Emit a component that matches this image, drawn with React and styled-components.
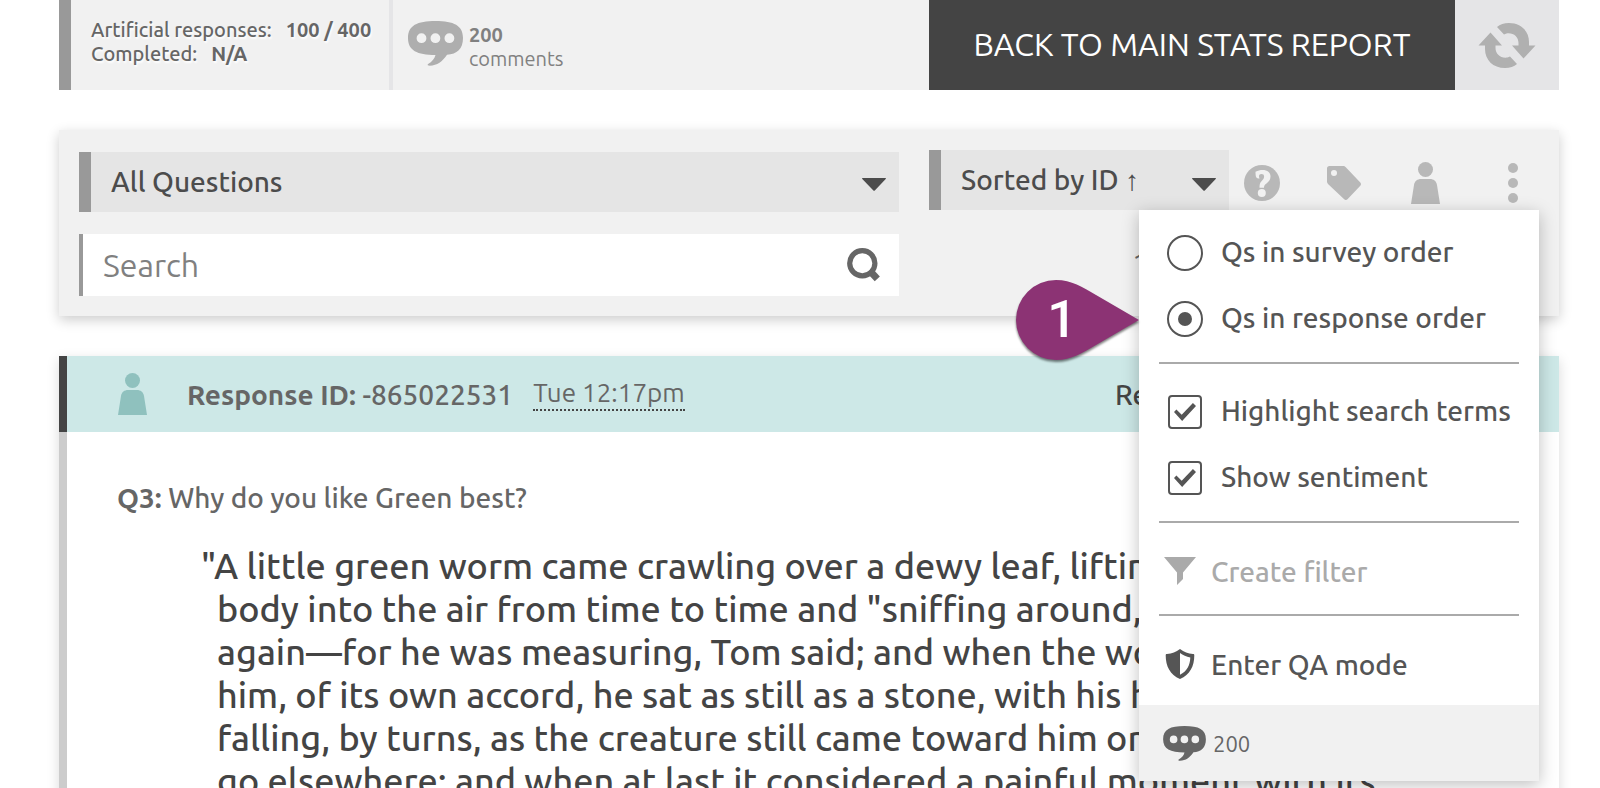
import React, { useState } from "react";
import styled, { createGlobalStyle } from "styled-components";

const GlobalStyle = createGlobalStyle`
  *, *:before, *:after {
    box-sizing: border-box;
  }

  body {
    margin: 0;
    background: #fff;
    color: #666;
    font-family: Ubuntu, "Noto Sans", sans-serif;
    font-size: 28px;
  }

  button, input, select {
    margin: 0;
    padding: 0;
    border: 0;
    border-radius: 0;
    background: none;
    color: inherit;
    font: inherit;
  }

  button {
    cursor: pointer;
  }

  svg {
    display: block;
    flex: none;
  }
`;

/* ---------- icons ---------- */

const CommentIcon = ({ width, height }) => (
  <svg width={width} height={height} viewBox="0 0 55 45" aria-hidden="true">
    <path
      fill="currentColor"
      fillRule="evenodd"
      d="M27.500 0C46 0 55 4.500 55 17c0 11-6 16-16 16.800C34 41 29 45 20.500 44.600c-1-.1-1.200-.9-.4-1.500C24 40.500 26.500 38 27.500 34 9 34 0 29.500 0 17S9 0 27.500 0zM13.500 12.300a4.900 4.900 0 1 0 0 9.800 4.900 4.900 0 0 0 0-9.800zm13.900 0a4.900 4.900 0 1 0 0 9.800 4.900 4.900 0 0 0 0-9.800zm14 0a4.900 4.900 0 1 0 0 9.800 4.900 4.900 0 0 0 0-9.800z"
    />
  </svg>
);

const RefreshIcon = () => (
  <svg width="58" height="45" viewBox="0 0 58 45" aria-hidden="true">
    <g fill="currentColor">
      <path d="M19 4C22 1.500 26 0 31 0c12 0 20 8 20 19v3.500h6.500L45.500 35.500 34 22.500h6.500V20c0-6-5-10.500-12-9.500l-2.500 1z" />
      <path
        transform="rotate(180 29 22.500)"
        d="M19 4C22 1.500 26 0 31 0c12 0 20 8 20 19v3.500h6.500L45.500 35.500 34 22.500h6.500V20c0-6-5-10.500-12-9.500l-2.500 1z"
      />
    </g>
  </svg>
);

const HelpIcon = () => (
  <svg width="36" height="36" viewBox="0 0 36 36" aria-hidden="true">
    <circle cx="18" cy="18" r="18" fill="currentColor" />
    <path
      fill="#f1f1f1"
      d="M11.500 6.800C14 5.600 16 5.100 18.500 5.100c5 0 8 2.500 8 6.500 0 3.600-2 5.400-4.300 7.200-1.600 1.200-2.200 2-2.200 4h-4.500c0-3 .3-4.800 2-6.600 1.600-1.700 2.600-2.700 2.600-4.600 0-1.700-1-2.500-2.700-2.500-1.500 0-2.300.8-2.400 2.200 0 .8.300 1.500.6 2.200-1.500.2-2.600-.1-3.200-.9-.8-1.200-.9-3.800-.9-5.800z"
    />
    <circle cx="17.800" cy="28" r="4" fill="#f1f1f1" />
  </svg>
);

const PersonIcon = () => (
  <svg width="30" height="42" viewBox="0 0 30 42" aria-hidden="true">
    <g fill="currentColor">
      <circle cx="14.500" cy="7.500" r="7.500" />
      <path d="M0 42 3 23c.6-4 3.500-6 7-6h9c3.500 0 6.400 2 7 6l3 19z" />
    </g>
  </svg>
);

const TagIcon = () => (
  <svg width="34" height="34" viewBox="0 0 34 34" aria-hidden="true">
    <path
      fill="currentColor"
      fillRule="evenodd"
      d="M2.500 0H16c1.200 0 2 .4 2.800 1.200L33.300 16.500c.9 1 .9 2.300 0 3.200L20.500 33.200c-1 1-2.400 1-3.300 0L1 18C.3 17.300 0 16.500 0 15.500v-13C0 .9.900 0 2.500 0zM7 4a3 3 0 1 0 0 6 3 3 0 0 0 0-6z"
    />
  </svg>
);

const KebabIcon = () => (
  <svg width="10" height="40" viewBox="0 0 10 40" aria-hidden="true">
    <g fill="currentColor">
      <circle cx="5" cy="5" r="5" />
      <circle cx="5" cy="20" r="5" />
      <circle cx="5" cy="35" r="5" />
    </g>
  </svg>
);

const SearchIcon = () => (
  <svg width="34" height="34" viewBox="0 0 34 34" aria-hidden="true">
    <g fill="none" stroke="currentColor">
      <circle cx="15.300" cy="15.200" r="12.600" strokeWidth="5.200" />
      <path d="M22.500 22.500 30.300 30.800" strokeWidth="7" />
    </g>
  </svg>
);

const Caret = () => (
  <svg width="24" height="13" viewBox="0 0 24 13" aria-hidden="true">
    <path fill="currentColor" d="M.5 0h23c.5 0 .6.600.2 1L12.800 12.400c-.4.400-1 .400-1.400 0L.3 1C-.1.600 0 0 .5 0z" />
  </svg>
);

const FilterIcon = () => (
  <svg width="32" height="28" viewBox="0 0 32 28" aria-hidden="true">
    <path fill="currentColor" d="M0 0h32L19 15.500V22l-6 6V15.500z" />
  </svg>
);

const ShieldIcon = () => (
  <svg width="32" height="30" viewBox="0 0 32 30" aria-hidden="true">
    <path
      fill="currentColor"
      fillRule="evenodd"
      d="M16 0c4 3 8 4.600 13 5 1 0 1.300.5 1.300 1.400C30.300 17 26 25.500 16 30 6 25.500 1.700 17 1.700 6.400 1.700 5.500 2 5 3 5c5-.4 9-2 13-5zm0 4v21.800c7-3.600 10-9.300 10.300-17.300C22.300 7.800 19 6.300 16 4z"
    />
  </svg>
);

/* ---------- layout ---------- */

const Page = styled.main`
  height: 100vh;
  overflow: hidden;
  padding: 0 41px 0 59px;
`;

const StatsBar = styled.header`
  display: flex;
  height: 90px;
  border-left: 12px solid #999;
  background: #f1f1f1;
  font-size: 20px;
  line-height: 24px;
`;

const Stats = styled.dl`
  width: 322px;
  margin: 0;
  padding: 18px 0 0 20px;
  border-right: 4px solid #e5e5e7;
  font-weight: 500;
  text-shadow: 1px 2px 2px #fff;
  white-space: nowrap;
`;

const Stat = styled.div`
  display: flex;
  gap: 14px;

  dd {
    margin: 0;
    font-weight: bold;
  }
`;

const Comments = styled.div`
  flex: 1;
  display: flex;
  align-items: flex-start;
  gap: 6px;
  padding: 21px 0 0 15px;
  color: #aeaeae;

  p {
    margin: 2px 0 0;
    color: #808080;
  }

  strong {
    display: block;
  }
`;

const BackButton = styled.button`
  width: 526px;
  padding-bottom: 2px;
  background: #444;
  color: #fff;
  font-size: 32px;
  white-space: nowrap;
`;

const RefreshButton = styled.button`
  display: grid;
  place-items: center;
  width: 104px;
  background: #e5e5e7;
  color: #b0b0b0;
`;

const Toolbar = styled.section`
  position: relative;
  z-index: 1;
  display: grid;
  grid-template-columns: 82fr 61fr;
  gap: 30px;
  margin-top: 40px;
  padding: 20px;
  background: #f1f1f1;
  box-shadow: 0 4px 12px rgba(0, 0, 0, 0.2);
`;

const Column = styled.div`
  display: flex;
  flex-direction: column;
  gap: 22px;
  min-width: 0;
  padding-top: ${(props) => props.$top || 0}px;
`;

const SelectBox = styled.div`
  display: grid;
  align-items: center;
  flex: ${(props) => props.$basis || "none"};
  height: 60px;
  border-left: 12px solid #999;
  background: #e5e5e5;
  color: #4c4c4c;

  select,
  svg {
    grid-area: 1 / 1;
  }

  select {
    appearance: none;
    width: 100%;
    height: 60px;
    padding: 0 50px 2px 20px;
    outline: none;
    font-weight: 500;
  }

  svg {
    justify-self: end;
    margin: ${(props) => (props.$basis ? 8 : 4)}px 13px 0 0;
    pointer-events: none;
  }
`;

const SearchBox = styled.form`
  display: flex;
  align-items: center;
  height: 62px;
  padding-right: 18px;
  border-left: 4px solid #999;
  background: #fff;
  color: #666;

  input {
    flex: 1;
    min-width: 0;
    height: 62px;
    padding: 0 20px;
    outline: none;
    font-size: 32px;
  }

  input::placeholder {
    color: #808080;
    opacity: 1;
  }
`;

const Actions = styled.div`
  display: flex;
`;

const IconRow = styled.div`
  flex: 1;
  display: flex;
  align-items: center;
  gap: 46px;
  padding: 6px 8px 0 15px;
  color: #b8b8b8;
`;

const IconButton = styled.button`
  display: grid;
  place-items: center;
  width: 36px;
  height: 44px;

  &:last-child {
    margin-left: auto;
  }
`;

const Total = styled.p`
  margin: 0;
  padding-right: 391px;
  line-height: 62px;
  text-align: right;
`;

/* ---------- options menu ---------- */

const Menu = styled.div`
  position: absolute;
  top: 80px;
  right: 20px;
  width: 400px;
  background: #fff;
  box-shadow: 0 4px 16px rgba(0, 0, 0, 0.25);
  color: #555;
`;

const MenuGroup = styled.div`
  margin: 0 20px;
  padding: 15px 0 10px;
  border-bottom: 2px solid #aaa;
  font-weight: 500;

  &:first-child {
    padding-top: 10px;
  }
`;

const LastGroup = styled(MenuGroup)`
  padding-bottom: 8px;
  border-bottom: 0;
`;

const Choice = styled.label`
  display: flex;
  align-items: center;
  gap: 18px;
  height: 66px;
  padding-left: 8px;
  line-height: 32px;
  white-space: nowrap;

  span {
    padding-bottom: 2px;
  }
`;

const Radio = styled.input.attrs({ type: "radio" })`
  appearance: none;
  display: grid;
  place-items: center;
  width: 36px;
  height: 36px;
  border: 2px solid #555;
  border-radius: 50%;

  &:checked:before {
    content: "";
    width: 14px;
    height: 14px;
    border-radius: 50%;
    background: #555;
  }
`;

const Checkbox = styled.input.attrs({ type: "checkbox" })`
  appearance: none;
  display: grid;
  place-items: center;
  width: 34px;
  height: 34px;
  margin: 0 1px;
  border: 2px solid #555;
  border-radius: 4px;

  &:checked:before {
    content: "";
    width: 22px;
    height: 18px;
    background: #555;
    clip-path: polygon(0 50%, 11% 36%, 35% 65%, 86% 0, 100% 16%, 37% 100%);
  }
`;

const MenuButton = styled.button`
  display: flex;
  align-items: center;
  gap: 15px;
  width: 100%;
  height: 66px;
  padding-left: 5px;

  &:disabled {
    color: #aaa;
  }
`;

const MenuFooter = styled.div`
  display: flex;
  align-items: center;
  gap: 7px;
  height: 76px;
  padding-left: 24px;
  background: #f1f1f1;
  color: #666;
  font-size: 22px;
`;

const Callout = styled.div`
  position: absolute;
  top: 70px;
  right: 100%;
  display: grid;
  align-items: center;
  color: #fff;
  font: 500 52px/80px Roboto, sans-serif;

  svg,
  span {
    grid-area: 1 / 1;
  }

  svg {
    filter: drop-shadow(0 2px 1px rgba(0, 0, 0, 0.5));
  }

  span {
    z-index: 1;
    width: 92px;
    text-align: center;
  }
`;

/* ---------- response ---------- */

const Response = styled.article`
  margin-top: 40px;
  box-shadow: 0 4px 12px rgba(0, 0, 0, 0.15);
`;

const ResponseHead = styled.div`
  display: flex;
  align-items: center;
  height: 76px;
  padding-left: 51px;
  border-left: 8px solid #444;
  background: #cde8e7;
  font-weight: 500;
  white-space: nowrap;

  svg {
    margin-right: 39px;
    color: #8fc1be;
  }
`;

const Time = styled.time`
  margin-left: 20px;
  border-bottom: 2px dotted #444;
  font-size: 26px;
  font-weight: normal;
  line-height: 32px;
`;

const Respondent = styled.span`
  width: 444px;
  margin-left: auto;
  color: #444;
`;

const ResponseBody = styled.div`
  min-height: 400px;
  padding: 50px 0 0 50px;
  border-left: 8px solid #ccc;
`;

const Question = styled.h2`
  margin: 0;
  font-size: 28px;
  font-weight: 500;
  line-height: 32px;
`;

const Quote = styled.blockquote`
  margin: 30px 0 0 100px;
  color: #444;
  font-size: 36px;
  font-weight: 500;
  line-height: 43px;
`;

const Line = styled.span`
  display: block;
  text-indent: ${(props) => (props.$open ? -16 : 0)}px;
  white-space: nowrap;
`;

const answer = [
  '"A little green worm came crawling over a dewy leaf, lifting two-thirds of his',
  'body into the air from time to time and "sniffing around," then proceeding',
  "again—for he was measuring, Tom said; and when the worm approached",
  "him, of its own accord, he sat as still as a stone, with his hopes rising and",
  "falling, by turns, as the creature still came toward him or seemed inclined to",
  "go elsewhere; and when at last it considered a painful moment with its",
];

const OptionsMenu = () => {
  const [order, setOrder] = useState("response");
  const [highlight, setHighlight] = useState(true);
  const [sentiment, setSentiment] = useState(true);

  return (
    <Menu>
      <MenuGroup>
        <Choice>
          <Radio name="order" checked={order === "survey"} onChange={() => setOrder("survey")} />
          <span>Qs in survey order</span>
        </Choice>
        <Choice>
          <Radio name="order" checked={order === "response"} onChange={() => setOrder("response")} />
          <span>Qs in response order</span>
        </Choice>
      </MenuGroup>
      <MenuGroup>
        <Choice>
          <Checkbox checked={highlight} onChange={(e) => setHighlight(e.target.checked)} />
          <span>Highlight search terms</span>
        </Choice>
        <Choice>
          <Checkbox checked={sentiment} onChange={(e) => setSentiment(e.target.checked)} />
          <span>Show sentiment</span>
        </Choice>
      </MenuGroup>
      <MenuGroup>
        <MenuButton type="button" disabled>
          <FilterIcon />
          Create filter
        </MenuButton>
      </MenuGroup>
      <LastGroup>
        <MenuButton type="button">
          <ShieldIcon />
          Enter QA mode
        </MenuButton>
      </LastGroup>
      <MenuFooter>
        <CommentIcon width={43} height={35} />
        200
      </MenuFooter>
      <Callout>
        <svg width="123" height="80" viewBox="0 0 123 80" aria-hidden="true">
          <path fill="#8c3374" d="M40 0c16 0 26 7 40 15l43 25-43 25C66 73 56 80 40 80a40 40 0 0 1 0-80z" />
        </svg>
        <span>1</span>
      </Callout>
    </Menu>
  );
};

const App = () => {
  return (
    <>
      <GlobalStyle />
      <Page>
        <StatsBar>
          <Stats>
            <Stat>
              <dt>Artificial responses:</dt>
              <dd>100 / 400</dd>
            </Stat>
            <Stat>
              <dt>Completed:</dt>
              <dd>N/A</dd>
            </Stat>
          </Stats>
          <Comments>
            <CommentIcon width={55} height={45} />
            <p>
              <strong>200</strong>
              comments
            </p>
          </Comments>
          <BackButton type="button">BACK TO MAIN STATS REPORT</BackButton>
          <RefreshButton type="button" aria-label="Refresh">
            <RefreshIcon />
          </RefreshButton>
        </StatsBar>

        <Toolbar>
          <Column $top={2}>
            <SelectBox>
              <select aria-label="Questions">
                <option>All Questions</option>
              </select>
              <Caret />
            </SelectBox>
            <SearchBox onSubmit={(e) => e.preventDefault()}>
              <input type="text" placeholder="Search" aria-label="Search" />
              <button type="submit" aria-label="Run search">
                <SearchIcon />
              </button>
            </SearchBox>
          </Column>
          <Column>
            <Actions>
              <SelectBox $basis="0 0 300px">
                <select aria-label="Sort order">
                  <option>Sorted by ID ↑</option>
                </select>
                <Caret />
              </SelectBox>
              <IconRow>
                <IconButton type="button" aria-label="Help">
                  <HelpIcon />
                </IconButton>
                <IconButton type="button" aria-label="Tags">
                  <TagIcon />
                </IconButton>
                <IconButton type="button" aria-label="Respondents">
                  <PersonIcon />
                </IconButton>
                <IconButton type="button" aria-label="More options">
                  <KebabIcon />
                </IconButton>
              </IconRow>
            </Actions>
            <Total>1</Total>
          </Column>
          <OptionsMenu />
        </Toolbar>

        <Response>
          <ResponseHead>
            <PersonIcon />
            <span>
              <strong>Response ID:</strong> -865022531
            </span>
            <Time>Tue 12:17pm</Time>
            <Respondent>Respondent</Respondent>
          </ResponseHead>
          <ResponseBody>
            <Question>
              <strong>Q3:</strong> Why do you like Green best?
            </Question>
            <Quote>
              {answer.map((line, i) => (
                <Line key={line} $open={i === 0}>
                  {line}
                </Line>
              ))}
            </Quote>
          </ResponseBody>
        </Response>
      </Page>
    </>
  );
};

export default App;
